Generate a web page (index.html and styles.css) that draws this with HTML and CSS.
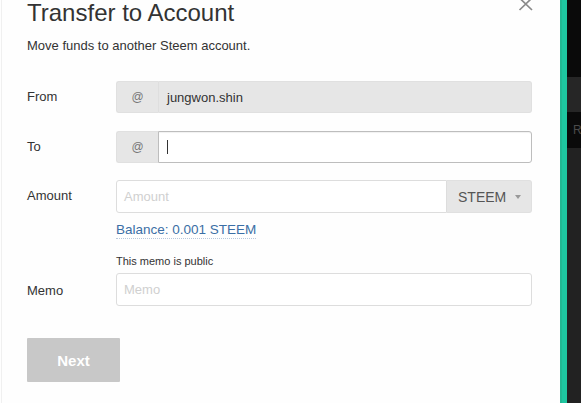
FILE: index.html
```html
<!DOCTYPE html>
<html>
<head>
<meta charset="utf-8">
<link rel="stylesheet" href="styles.css">
</head>
<body>
<div class="page">
  <div class="modal">
    <div class="edge-lines"></div>
    <div class="content">
      <div class="head">
        <h1 class="title">Transfer to Account</h1>
        <svg class="close" width="16" height="16" viewBox="0 0 16 16" aria-label="close">
          <path d="M1.5 2 L14 14 M14 2 L1.5 14" stroke="#8a8a8a" stroke-width="1.7" fill="none"/>
        </svg>
      </div>
      <p class="subtitle">Move funds to another Steem account.</p>

      <div class="form">
        <div class="row">
          <label class="label">From</label>
          <div class="group disabled">
            <span class="addon">@</span>
            <span class="field">jungwon.shin</span>
          </div>
        </div>
        <div class="row to-row">
          <label class="label">To</label>
          <div class="group">
            <span class="addon">@</span>
            <span class="field focus"><span class="caret"></span></span>
          </div>
        </div>
        <div class="row amount-row">
          <label class="label">Amount</label>
          <div class="col">
            <div class="group">
              <span class="field input placeholder">Amount</span>
              <span class="select">STEEM <span class="arrow"></span></span>
            </div>
            <a class="balance">Balance: 0.001 STEEM</a>
          </div>
        </div>
        <div class="row memo-row">
          <label class="label">Memo</label>
          <div class="col">
            <div class="hint">This memo is public</div>
            <div class="group">
              <span class="field input placeholder">Memo</span>
            </div>
          </div>
        </div>
      </div>

      <button class="next">Next</button>
    </div>
  </div>
  <div class="accent"></div>
  <div class="side">
    <div class="band b1"></div>
    <div class="band b2"></div>
    <div class="band b3"><span>R</span></div>
    <div class="band b4"></div>
  </div>
</div>
</body>
</html>
```

FILE: styles.css
```css
html, body {
  margin: 0;
  padding: 0;
  height: 100%;
}
body {
  font-family: "Liberation Sans", Arial, sans-serif;
  color: #333;
  background: #222;
  overflow: hidden;
}
.page {
  display: flex;
  height: 403px;
  width: 581px;
}
.modal {
  width: 560px;
  background: #fefefe;
  display: flex;
  flex: none;
}
.edge-lines {
  width: 6px;
  flex: none;
  border-left: 1px solid #f0f0f0;
  margin-left: 1px;
  box-sizing: border-box;
}
.content {
  flex: 1;
  padding-left: 20px;
  padding-right: 27px;
}
.head {
  display: flex;
  justify-content: space-between;
  align-items: flex-start;
  height: 24px;
}
.title {
  margin: 1px 0 0;
  font-size: 24px;
  line-height: 24px;
  font-weight: normal;
  color: #333;
}
.close {
  display: block;
  margin-top: -4px;
  margin-right: -1px;
}
.subtitle {
  margin: 14px 0 0;
  font-size: 13px;
  line-height: 16px;
  color: #333;
}
.form {
  margin-top: 27px;
  display: flex;
  flex-direction: column;
}
.row {
  display: grid;
  grid-template-columns: 89px 416px;
  align-items: start;
  margin-bottom: 18px;
}
.to-row {
  margin-bottom: 17px;
}
.label {
  font-size: 13px;
  line-height: 32px;
  color: #333;
}
.group {
  display: flex;
  height: 32px;
  box-sizing: border-box;
}
.addon {
  width: 42px;
  flex: none;
  display: flex;
  align-items: center;
  justify-content: center;
  background: #e6e6e6;
  border: 1px solid #e0e0e0;
  border-right: none;
  border-radius: 3px 0 0 3px;
  color: #777;
  font-size: 12px;
  box-sizing: border-box;
}
.field {
  flex: 1;
  display: flex;
  align-items: center;
  padding-left: 8px;
  font-size: 13px;
  color: #333;
  background: #fff;
  border: 1px solid #ddd;
  border-radius: 0 3px 3px 0;
  box-sizing: border-box;
}
.disabled .field {
  background: #e6e6e6;
  border-color: #e0e0e0;
  border-left-color: #dedede;
}
.field.focus {
  border-color: #bdbdbd;
  box-shadow: inset 0 1px 1px rgba(0,0,0,0.06);
}
.caret {
  width: 1px;
  height: 14px;
  background: #333;
}
.field.input {
  border-radius: 3px;
  padding-left: 7px;
}
.placeholder {
  color: #d0d0d0;
}
.amount-row .field.input {
  border-radius: 3px 0 0 3px;
}
.amount-row .group {
  height: 33px;
}
.select {
  width: 85px;
  flex: none;
  display: flex;
  align-items: center;
  padding-left: 11px;
  box-sizing: border-box;
  background: #e6e6e6;
  border: 1px solid #e0e0e0;
  border-left: none;
  border-radius: 0 3px 3px 0;
  color: #555;
  font-size: 14px;
}
.arrow {
  margin-left: 9px;
  width: 0;
  height: 0;
  border-left: 3.5px solid transparent;
  border-right: 3.5px solid transparent;
  border-top: 4px solid #999;
}
.col {
  display: flex;
  flex-direction: column;
}
.balance {
  align-self: flex-start;
  margin-top: 9px;
  font-size: 13.5px;
  line-height: 16px;
  color: #3a6ea5;
  border-bottom: 1px dotted #b8c8dc;
}
.amount-row {
  margin-bottom: 15px;
}
.hint {
  font-size: 11px;
  line-height: 14px;
  color: #333;
  margin-bottom: 5px;
}
.memo-row .label {
  align-self: end;
  line-height: 30px;
}
.memo-row .group {
  height: 33px;
}
.memo-row {
  margin-bottom: 0;
}
.next {
  display: block;
  margin-top: 32px;
  width: 93px;
  height: 44px;
  border: none;
  background: #c8c8c8;
  color: #fff;
  font-family: "Liberation Sans", Arial, sans-serif;
  font-weight: bold;
  font-size: 15px;
  padding: 0;
  border-radius: 1px;
}
.accent {
  width: 7px;
  flex: none;
  background: #1ec6a0;
  box-shadow: inset 2px 0 0 #22b893;
}
.side {
  flex: 1;
  display: flex;
  flex-direction: column;
  background: #222;
}
.band.b1 { height: 77px; background: #0a0a0a; }
.band.b2 { height: 35px; background: #262626; }
.band.b3 {
  height: 36px;
  background: #0a0a0a;
  color: #4a4a4a;
  font-size: 12px;
  display: flex;
  align-items: center;
  padding-left: 6px;
}
.band.b4 { flex: 1; background: #222; }
```
